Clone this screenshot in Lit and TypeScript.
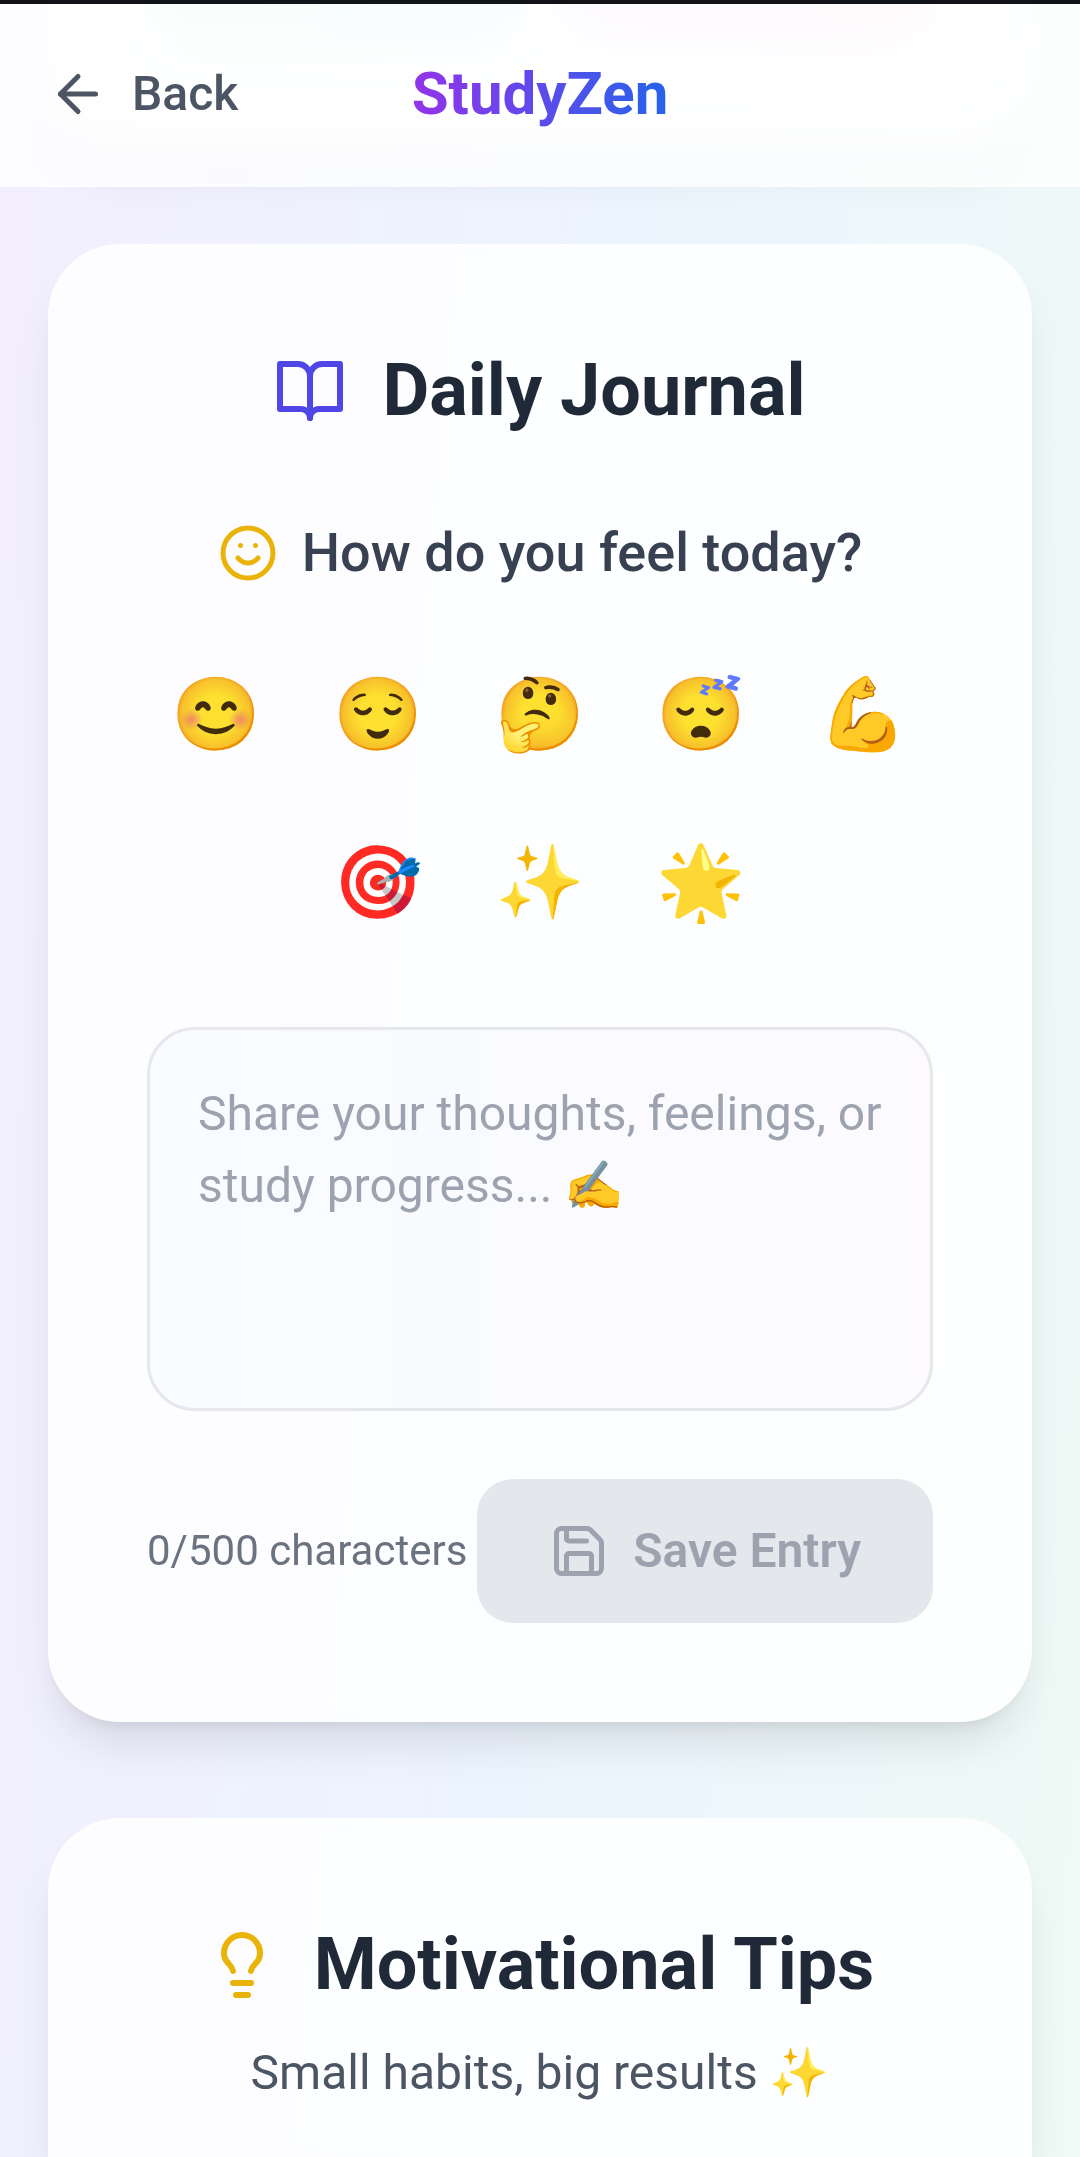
import { LitElement, html, css, svg, nothing } from "lit";
import { customElement, property, state } from "lit/decorators.js";

const ICONS: Record<string, unknown> = {
  back: svg`<path d="m12 19-7-7 7-7"/><path d="M19 12H5"/>`,
  book: svg`<path d="M2 3h6a4 4 0 0 1 4 4v14a3 3 0 0 0-3-3H2z"/><path d="M22 3h-6a4 4 0 0 0-4 4v14a3 3 0 0 1 3-3h7z"/>`,
  smile: svg`<circle cx="12" cy="12" r="10"/><path d="M8 14s1.5 2 4 2 4-2 4-2"/><path d="M9 9h.01"/><path d="M15 9h.01"/>`,
  save: svg`<path d="M15.2 3a2 2 0 0 1 1.4.6l3.8 3.8a2 2 0 0 1 .6 1.4V19a2 2 0 0 1-2 2H5a2 2 0 0 1-2-2V5a2 2 0 0 1 2-2z"/><path d="M17 21v-7a1 1 0 0 0-1-1H8a1 1 0 0 0-1 1v7"/><path d="M7 3v4a1 1 0 0 0 1 1h7"/>`,
  bulb: svg`<path d="M15 14c.2-1 .7-1.7 1.5-2.5 1-.9 1.5-2.2 1.5-3.5A6 6 0 0 0 6 8c0 1 .2 2.2 1.5 3.5.7.7 1.3 1.5 1.5 2.5"/><path d="M9 18h6"/><path d="M10 22h4"/>`,
};

@customElement("line-icon")
export class LineIcon extends LitElement {
  @property() name = "";

  static styles = css`
    :host {
      display: block;
      flex: none;
      width: 60px;
      height: 60px;
    }
    .glyph {
      display: block;
      width: 100%;
      height: 100%;
      fill: none;
      stroke: currentColor;
      stroke-width: 2;
      stroke-linecap: round;
      stroke-linejoin: round;
    }
  `;

  render() {
    return html`<svg class="glyph" viewBox="0 0 24 24" aria-hidden="true">${ICONS[this.name] ?? nothing}</svg>`;
  }
}

const MOODS = ["😊", "😌", "🤔", "😴", "💪", "🎯", "✨", "🌟"];
const LIMIT = 500;

@customElement("app-root")
export class AppRoot extends LitElement {
  @state() private entry = "";
  @state() private mood = "";

  static styles = css`
    :host {
      display: grid;
      height: 100vh;
      overflow: hidden;
      box-sizing: border-box;
      border-top: 4px solid #13131a;
      background: linear-gradient(95deg, #f3eefe 0%, #ecf4ff 50%, #effaf6 100%);
      font-family: Roboto, "Noto Color Emoji", sans-serif;
      font-size: 48px;
      line-height: 72px;
      color: #4b5563;
    }
    *, *::before {
      box-sizing: border-box;
    }
    h1, h2, h3, p {
      margin: 0;
    }
    button, textarea {
      font: inherit;
      color: inherit;
      border: 0;
      margin: 0;
    }
    .bar {
      grid-area: 1 / 1;
      align-self: start;
      z-index: 1;
      display: grid;
      grid-template-columns: 1fr auto 1fr;
      align-items: center;
      padding: 48px;
      border-bottom: 3px solid rgba(255, 255, 255, 0.2);
      background: rgba(255, 255, 255, 0.8);
      backdrop-filter: blur(24px);
    }
    .back {
      justify-self: start;
      display: flex;
      align-items: center;
      gap: 24px;
      padding: 0;
      background: none;
      font-weight: 500;
    }
    .brand {
      font-size: 60px;
      line-height: 84px;
      font-weight: 700;
      color: transparent;
      background: linear-gradient(90deg, #9333ea, #2563eb);
      background-clip: text;
      -webkit-background-clip: text;
    }
    .page {
      grid-area: 1 / 1;
      min-height: 0;
      display: flex;
      flex-direction: column;
      gap: 96px;
      padding: 0 48px;
    }
    .card {
      flex: none;
      padding: 96px;
      border: 3px solid rgba(255, 255, 255, 0.2);
      border-radius: 72px;
      background: rgba(255, 255, 255, 0.85);
      box-shadow: 0 30px 45px -9px rgba(0, 0, 0, 0.1), 0 12px 18px -12px rgba(0, 0, 0, 0.1);
      backdrop-filter: blur(12px);
    }
    .previous {
      display: grid;
      grid-template-columns: 1fr 1fr;
      gap: 36px;
      padding-top: 0;
      border-top: 0;
      border-radius: 0 0 72px 72px;
    }
    .tile {
      height: 45px;
      border-radius: 0 0 48px 48px;
    }
    .fresh {
      background: linear-gradient(90deg, #dcfce7, #dbeafe);
    }
    .warm {
      background: linear-gradient(90deg, #f3e8ff, #fce7f3);
    }
    .tips {
      flex: 1 0 auto;
      padding-bottom: 0;
      border-bottom: 0;
      border-radius: 72px 72px 0 0;
    }
    .title {
      display: flex;
      align-items: center;
      justify-content: center;
      gap: 36px;
      font-size: 72px;
      line-height: 96px;
      font-weight: 700;
      color: #1f2937;
    }
    .title line-icon {
      width: 72px;
      height: 72px;
    }
    .indigo {
      color: #4f46e5;
    }
    .gold {
      color: #eab308;
    }
    .question {
      display: flex;
      align-items: center;
      justify-content: center;
      gap: 24px;
      margin-top: 72px;
      font-size: 54px;
      line-height: 84px;
      font-weight: 500;
      color: #374151;
    }
    .moods {
      display: flex;
      flex-wrap: wrap;
      justify-content: center;
      gap: 24px;
      margin-top: 48px;
    }
    .mood {
      padding: 24px;
      border-radius: 36px;
      background: none;
      font-size: 72px;
      line-height: 96px;
    }
    .mood[aria-pressed="true"] {
      background: #e0e7ff;
    }
    .entry {
      display: block;
      width: 100%;
      height: 384px;
      margin-top: 72px;
      padding: 48px;
      border: 3px solid #e5e7eb;
      border-radius: 48px;
      background: linear-gradient(90deg, #f8fbff, #fcfaff);
      resize: none;
      outline: none;
      overflow: hidden;
      color: #1f2937;
    }
    .entry::placeholder {
      color: #9ca3af;
      opacity: 1;
    }
    .actions {
      display: flex;
      align-items: center;
      justify-content: space-between;
      margin-top: 68px;
    }
    .count {
      font-size: 42px;
      line-height: 60px;
      color: #6b7280;
      white-space: nowrap;
    }
    .save {
      display: flex;
      align-items: center;
      gap: 24px;
      padding: 36px 72px;
      border-radius: 36px;
      background: #4f46e5;
      color: #ffffff;
      font-weight: 600;
      white-space: nowrap;
    }
    .save:disabled {
      background: #e4e7ec;
      color: #9ca3af;
    }
    .lead {
      margin-top: 24px;
      text-align: center;
    }
  `;

  private onInput(e: Event) {
    this.entry = (e.target as HTMLTextAreaElement).value;
  }

  render() {
    return html`
      <header class="bar">
        <button class="back" type="button"><line-icon name="back"></line-icon>Back</button>
        <h1 class="brand">StudyZen</h1>
      </header>
      <main class="page">
        <div class="card previous" aria-hidden="true">
          <div class="tile fresh"></div>
          <div class="tile warm"></div>
        </div>
        <section class="card">
          <h2 class="title"><line-icon class="indigo" name="book"></line-icon>Daily Journal</h2>
          <h3 class="question"><line-icon class="gold" name="smile"></line-icon>How do you feel today?</h3>
          <div class="moods">
            ${MOODS.map(
              (m) => html`<button class="mood" type="button" aria-pressed=${this.mood === m ? "true" : "false"}
                @click=${() => (this.mood = m)}>${m}</button>`
            )}
          </div>
          <textarea class="entry" aria-label="Journal entry" maxlength=${LIMIT} .value=${this.entry}
            placeholder="Share your thoughts, feelings, or study progress... ✍️" @input=${this.onInput}></textarea>
          <div class="actions">
            <span class="count">${this.entry.length}/${LIMIT} characters</span>
            <button class="save" type="button" ?disabled=${this.entry.trim() === ""}>
              <line-icon name="save"></line-icon>Save Entry
            </button>
          </div>
        </section>
        <section class="card tips">
          <h2 class="title"><line-icon class="gold" name="bulb"></line-icon>Motivational Tips</h2>
          <p class="lead">Small habits, big results ✨</p>
        </section>
      </main>
    `;
  }
}
